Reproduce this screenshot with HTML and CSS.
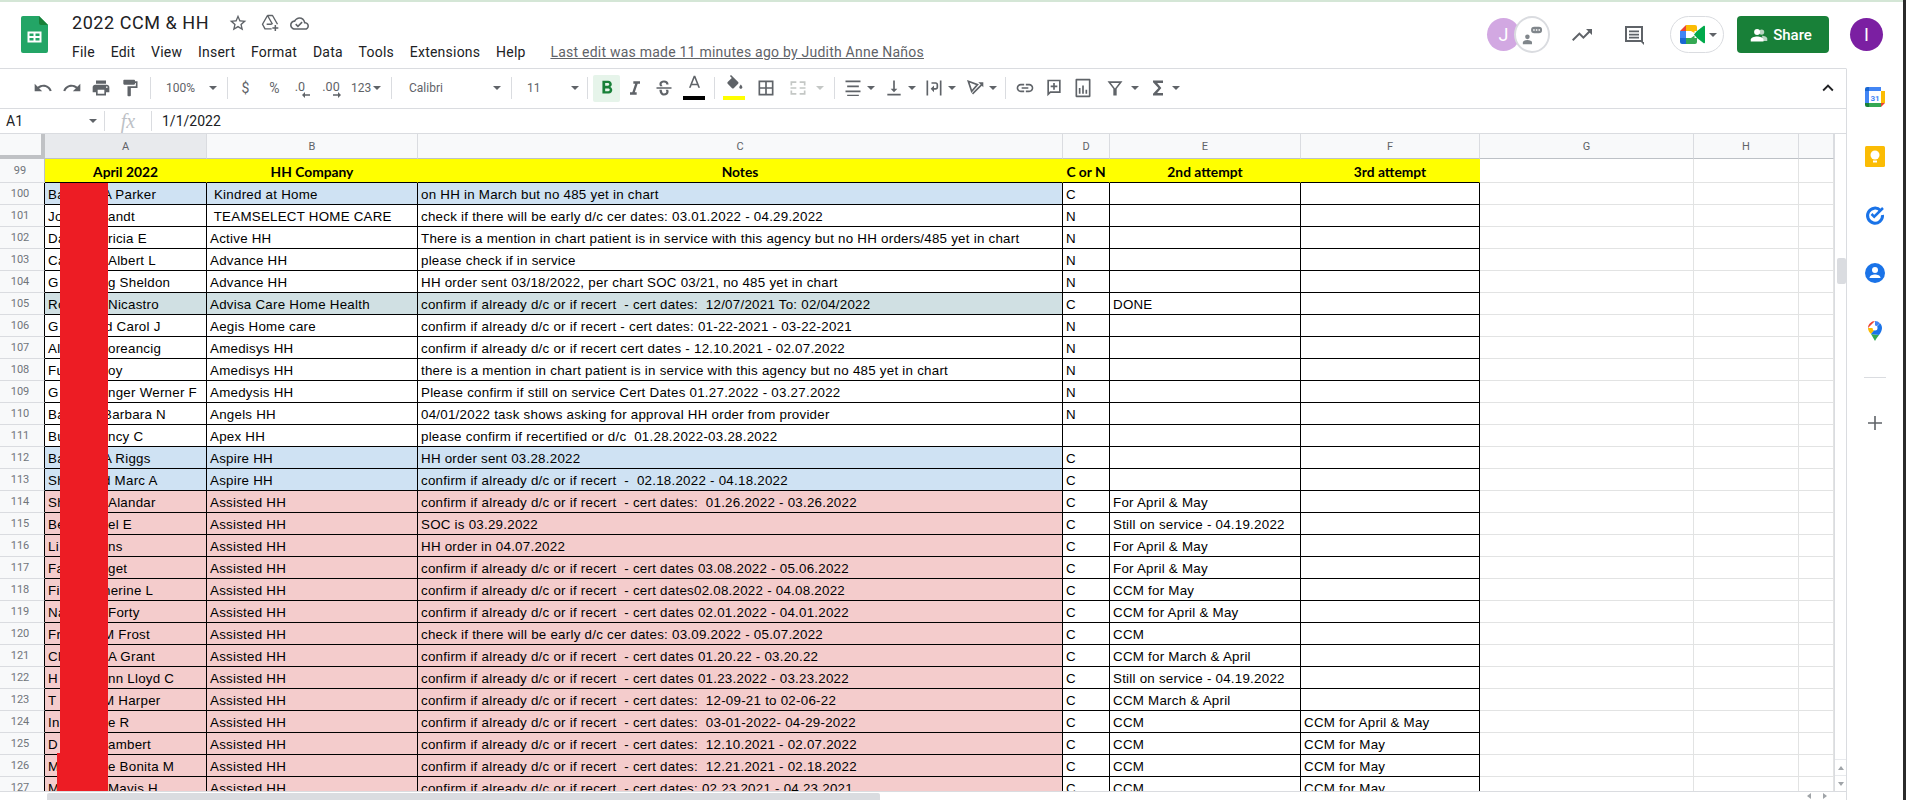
FILE: index.html
```html
<!DOCTYPE html>
<html lang="en">
<head>
<meta charset="utf-8">
<title>2022 CCM &amp; HH</title>
<link rel="stylesheet" href="styles.css">
</head>
<body>
<div class="page">
<div class="app">
  <header class="appbar">
    <svg class="logo" viewBox="0 0 27 37"><path fill="#23a566" d="M2 0h16l9 9v26a2 2 0 0 1-2 2H2a2 2 0 0 1-2-2V2a2 2 0 0 1 2-2z"/><path fill="#188038" d="M18 0l9 9h-7a2 2 0 0 1-2-2z"/><path fill="#fff" d="M6.5 15.5h14v11h-14z"/><path fill="#23a566" d="M8.5 17.5h4v2.5h-4zM14.500 17.500h4V20h-4zM8.500 22h4v2.500h-4zM14.500 22h4v2.500h-4z"/></svg>
    <div class="doc">
      <div class="titlerow">
        <span class="title">2022 CCM &amp; HH</span>
        <svg class="ti star" viewBox="0 0 24 24"><path d="M22 9.240l-7.190-.62L12 2 9.190 8.630 2 9.240l5.460 4.730L5.820 21 12 17.270 18.180 21l-1.630-7.030L22 9.240zM12 15.400l-3.760 2.270 1-4.280-3.320-2.880 4.380-.38L12 6.100l1.710 4.040 4.380.38-3.320 2.880 1 4.280L12 15.400z"/></svg>
        <svg class="ti drive" viewBox="0 0 24 24"><path class="st" d="M9 3h6l6 10.500M9 3 3 13.500 6 19h8M9 3l6 10.500M8 13.500h6"/><path d="M17.500 14.500h1.800v2.700H22V19h-2.700v2.700h-1.800V19h-2.700v-1.800h2.700z"/></svg>
        <svg class="ti cloud" viewBox="0 0 24 24"><path d="M19.350 10.040C18.670 6.590 15.640 4 12 4 9.110 4 6.600 5.640 5.350 8.040 2.340 8.360 0 10.910 0 14c0 3.310 2.690 6 6 6h13c2.760 0 5-2.240 5-5 0-2.640-2.050-4.780-4.650-4.960zM19 18H6c-2.210 0-4-1.790-4-4 0-2.050 1.530-3.760 3.560-3.970l1.070-.11.5-.95C8.080 7.140 9.940 6 12 6c2.620 0 4.880 1.860 5.390 4.430l.3 1.500 1.530.11c1.560.1 2.780 1.410 2.780 2.960 0 1.650-1.350 3-3 3zm-9-3.820l-2.090-2.090L6.500 13.500 10 17l6.010-6.010-1.410-1.410z"/></svg>
      </div>
      <nav class="menu">
        <span>File</span><span>Edit</span><span>View</span><span>Insert</span><span>Format</span><span>Data</span><span>Tools</span><span>Extensions</span><span>Help</span>
        <span class="lastedit">Last edit was made 11 minutes ago by Judith Anne Naños</span>
      </nav>
    </div>
    <div class="actions">
      <div class="avatar av-j">J</div>
      <div class="chatcircle"><svg viewBox="0 0 24 24"><path fill="#80868b" d="M7 11.500a2.500 2.500 0 1 1 0 5 2.500 2.500 0 0 1 0-5zM2 22v-2c0-1.500 2.500-2.500 5-2.500s5 1 5 2.500v2z"/><rect x="11" y="3" width="12" height="7" rx="3.500" fill="#80868b"/><path fill="#fff" d="M13.300 5.700h1.600v1.600h-1.600zM16.200 5.700h1.600v1.600h-1.600zM19.100 5.700h1.600v1.600h-1.600z"/></svg></div>
      <svg class="act trend" viewBox="0 0 24 24"><path d="M16 6l2.290 2.290-4.880 4.880-4-4L2 16.590 3.410 18l6-6 4 4 6.300-6.290L22 12V6z"/></svg>
      <svg class="act cmt" viewBox="0 0 24 24"><path d="M3 3h18v16h1v3l-3-3H3zm2 2v12h14V5zm2 2.500h10v1.800H7zm0 3.200h10v1.800H7zm0 3.100h10v1.700H7z"/></svg>
      <div class="meet">
        <svg viewBox="0 0 25 19"><path fill="#ea4335" d="M0 6l6-6v6z"/><path fill="#4285f4" d="M0 6h6v7H0z"/><path fill="#1967d2" d="M0 13h6v6H2a2 2 0 0 1-2-2z"/><path fill="#fbbc04" d="M6 0h9a2 2 0 0 1 2 2v4h-2.500v2L11 6H6z"/><path fill="#34a853" d="M6 13h5l3.500-2.500V13H17v4a2 2 0 0 1-2 2H6z"/><path fill="#00a94b" d="M14 9.500 17 6l6.500-5c.7-.5 1.500 0 1.500.8v15.400c0 .8-.8 1.300-1.500.8L17 13z"/></svg>
        <span class="caret meetcaret"></span>
      </div>
      <button class="share"><svg viewBox="0 0 24 24"><circle cx="15.500" cy="8" r="3.500" fill="#b7d5c1"/><path fill="#b7d5c1" d="M16 13c3 0 7 1.500 7 4v3h-6z"/><circle cx="9.500" cy="8" r="4" fill="#fff"/><path fill="#fff" d="M9.500 14C6 14 1 15.700 1 18v2.500h17V18c0-2.300-5-4-8.500-4z"/></svg>Share</button>
      <div class="avatar av-i">I</div>
    </div>
  </header>

  <div class="workspace">
    <main class="main">
      <div class="toolbar">
        <span class="tb"><svg viewBox="0 0 24 24"><path d="M12.500 8c-2.650 0-5.050.99-6.900 2.600L2 7v9h9l-3.620-3.620c1.390-1.160 3.160-1.880 5.120-1.880 3.540 0 6.550 2.310 7.600 5.500l2.370-.78C21.080 11.030 17.150 8 12.500 8z"/></svg></span>
        <span class="tb"><svg viewBox="0 0 24 24"><path d="M18.400 10.600C16.550 8.990 14.150 8 11.500 8c-4.650 0-8.580 3.030-9.960 7.220L3.900 16c1.050-3.190 4.050-5.500 7.600-5.500 1.950 0 3.730.72 5.120 1.880L13 16h9V7l-3.600 3.600z"/></svg></span>
        <span class="tb"><svg viewBox="0 0 24 24"><path d="M19 8H5c-1.660 0-3 1.340-3 3v6h4v4h12v-4h4v-6c0-1.660-1.340-3-3-3zm-3 11H8v-5h8v5zm3-7c-.55 0-1-.45-1-1s.45-1 1-1 1 .45 1 1-.45 1-1 1zm-1-9H6v4h12V3z"/></svg></span>
        <span class="tb"><svg viewBox="0 0 24 24"><path d="M18 4V3c0-.55-.45-1-1-1H5c-.55 0-1 .45-1 1v4c0 .55.45 1 1 1h12c.55 0 1-.45 1-1V6h1v4H9v11c0 .55.45 1 1 1h2c.55 0 1-.45 1-1v-9h8V4h-3z"/></svg></span>
        <span class="sep ml6"></span>
        <span class="sel zoomsel"><span>100%</span><span class="caret"></span></span>
        <span class="sep"></span>
        <span class="tb ml3 glyph">$</span>
        <span class="tb glyph">%</span>
        <span class="tb dec w22"><span>.0</span><svg viewBox="0 0 8 6"><path d="M8 2.300H3V0L0 3l3 3V3.700h5z"/></svg></span>
        <span class="tb dec w40"><span>.00</span><svg viewBox="0 0 8 6"><path d="M0 2.300h5V0l3 3-3 3V3.700H0z"/></svg></span>
        <span class="sel numsel"><span>123</span><span class="caret"></span></span>
        <span class="sep"></span>
        <span class="sel fontsel"><span>Calibri</span><span class="caret"></span></span>
        <span class="sep"></span>
        <span class="sel sizesel"><span>11</span><span class="caret"></span></span>
        <span class="sep"></span>
        <span class="boldbtn"><svg viewBox="0 0 24 24"><path d="M15.600 10.790c.97-.67 1.650-1.770 1.650-2.790 0-2.260-1.750-4-4-4H7v14h7.040c2.090 0 3.710-1.700 3.710-3.790 0-1.520-.86-2.820-2.150-3.420zM10 6.500h3c.83 0 1.500.67 1.500 1.500s-.67 1.500-1.500 1.500h-3v-3zm3.500 9H10v-3h3.500c.83 0 1.500.67 1.500 1.500s-.67 1.500-1.500 1.500z"/></svg></span>
        <span class="tb"><svg viewBox="0 0 24 24"><path d="M10 4v3h2.210l-3.420 10H6v3h8v-3h-2.210l3.420-10H18V4z"/></svg></span>
        <span class="tb"><svg viewBox="0 0 24 24"><path d="M12 3C9 3 6.500 4.500 6.500 7.200c0 1 .3 1.800.9 2.800h3c-.8-.8-1.300-1.500-1.300-2.500 0-1.400 1.300-2 2.900-2 1.800 0 2.700.9 2.800 2.300h2.700C17.400 4.900 15.300 3 12 3zM3 11v2h18v-2zm6.300 3H6.500c.2 4.500 2.500 7 5.500 7 3.200 0 5.500-1.800 5.500-4.500 0-1-.1-1.800-.5-2.500h-3c.6.700.8 1.500.8 2.500 0 1.300-1.300 2-2.800 2-1.500 0-2.500-1.600-2.700-4.500z"/></svg></span>
        <span class="tb colorbtn"><svg viewBox="0 0 24 24"><path d="M11 1L5 16h2.250l1.120-3h7.250l1.120 3H19L13 1h-2zm-1.880 10L12 3.700 14.880 11H9.120z"/></svg><i class="bar black"></i></span>
        <span class="sep ml4"></span>
        <span class="tb colorbtn w30 ml4"><svg viewBox="0 0 24 24"><path d="M7.600 0 6.200 1.400l2.400 2.400-5.200 5.100c-.6.6-.6 1.600 0 2.200l5.500 5.500c.6.6 1.500.6 2.100 0l5.600-5.500c.6-.6.6-1.600 0-2.200zM20 12s-2 2.200-2 3.500c0 1.100.9 2 2 2s2-.9 2-2c0-1.300-2-3.500-2-3.500z"/></svg><i class="bar yellow"></i></span>
        <span class="tb ml2"><svg viewBox="0 0 24 24"><path d="M3 3v18h18V3H3zm8 16H5v-6h6v6zm0-8H5V5h6v6zm8 8h-6v-6h6v6zm0-8h-6V5h6v6z"/></svg></span>
        <span class="tb ml3 dim"><svg viewBox="0 0 24 24"><path d="M3 4h7v2H5v3H3zM14 4h7v5h-2V6h-5zM3 15h2v3h5v2H3zM19 15h2v5h-7v-2h5zM3 11h7v2H3zM14 11h7v2h-7z"/></svg></span>
        <span class="caretbox"><span class="caret dimcaret"></span></span>
        <span class="sep ml6"></span>
        <span class="tb ml3"><svg viewBox="0 0 24 24"><path d="M3 3h18v2H3zM5 9h14v2H5zM3 15h18v2H3zM5 20h14v1.500H5z"/></svg></span>
        <span class="caret"></span>
        <span class="tb ml4"><svg viewBox="0 0 24 24"><path d="M16 13h-3V3h-2v10H8l4 4 4-4zM4 19v2h16v-2H4z"/></svg></span>
        <span class="caret"></span>
        <span class="tb ml3"><svg viewBox="0 0 24 24"><path d="M3 3h2v18H3zM19 3h2v18h-2zM9 5h5c1.700 0 3 1.300 3 3v3c0 1.700-1.300 3-3 3h-2v3l-4-4 4-4v3h2c.6 0 1-.4 1-1V8c0-.6-.4-1-1-1H9z"/></svg></span>
        <span class="caret"></span>
        <span class="tb ml4"><svg viewBox="0 0 24 24"><path class="strk" d="M4 4l11 4-7 8z"/><path class="strk" d="M9 19 21 7"/><path d="M22 5v6l-6-6z"/></svg></span>
        <span class="caret"></span>
        <span class="sep ml8"></span>
        <span class="tb ml4"><svg viewBox="0 0 24 24"><path d="M3.900 12c0-1.710 1.390-3.100 3.100-3.100h4V7H7c-2.760 0-5 2.240-5 5s2.240 5 5 5h4v-1.900H7c-1.710 0-3.100-1.390-3.100-3.100zM8 13h8v-2H8v2zm9-6h-4v1.900h4c1.710 0 3.100 1.390 3.100 3.100s-1.390 3.100-3.100 3.100h-4V17h4c2.760 0 5-2.240 5-5s-2.240-5-5-5z"/></svg></span>
        <span class="tb"><svg viewBox="0 0 24 24"><path d="M4 2h16v16H8l-4 4zm2 2v13.200L7.200 16H18V4zm5 2h2v3h3v2h-3v3h-2v-3H8V9h3z"/></svg></span>
        <span class="tb"><svg viewBox="0 0 24 24"><path d="M4 1h16c.6 0 1 .4 1 1v20c0 .6-.4 1-1 1H4c-.6 0-1-.4-1-1V2c0-.6.4-1 1-1zm1 2v18h14V3zm2 9h2v7H7zm4-3h2v10h-2zm4 5h2v5h-2z"/></svg></span>
        <span class="tb ml3"><svg viewBox="0 0 24 24"><path d="M3 4h18l-7 9v8h-4v-8zm4 2 5 6.500L17 6zm5 9v4h0v-4z"/></svg></span>
        <span class="caret ml2"></span>
        <span class="tb ml4"><svg viewBox="0 0 24 24"><path d="M18 3H6v2l6.500 7L6 19v2h12v-3h-7l5-6-5-6h7z"/></svg></span>
        <span class="caret"></span>
        <span class="tb chevron"><svg viewBox="0 0 24 24"><path d="M7.410 15.410 12 10.830l4.590 4.580L18 14l-6-6-6 6z"/></svg></span>
      </div>

      <div class="formula">
        <span class="namebox"><span>A1</span><span class="caret"></span></span>
        <span class="fsep"></span>
        <span class="fx">fx</span>
        <span class="fsep"></span>
        <span class="fval">1/1/2022</span>
      </div>

      <div class="sheet">
        <div class="sheet-body">
          <div class="gridwrap">
            <table class="grid">
              <colgroup><col class="c-rh"><col class="c-a"><col class="c-b"><col class="c-c"><col class="c-d"><col class="c-e"><col class="c-f"><col class="c-g"><col class="c-h"><col class="c-i"></colgroup>
              <thead>
                <tr class="letters"><th class="corner"></th><th class="selcol">A</th><th>B</th><th>C</th><th>D</th><th>E</th><th>F</th><th>G</th><th>H</th><th></th></tr>
              </thead>
              <tbody>
                <tr class="head"><th class="rh">99</th><td>April 2022</td><td>HH Company</td><td>Notes</td><td>C or N</td><td>2nd attempt</td><td>3rd attempt</td><td></td><td></td><td></td></tr>
                <tr class="blue"><th class="rh">100</th><td><span class="lead s">Ba</span>A Parker</td><td> Kindred at Home</td><td>on HH in March but no 485 yet in chart</td><td>C</td><td></td><td></td><td></td><td></td><td></td></tr>
                <tr><th class="rh">101</th><td><span class="lead">Jo</span>andt</td><td> TEAMSELECT HOME CARE</td><td>check if there will be early d/c cer dates: 03.01.2022 - 04.29.2022</td><td>N</td><td></td><td></td><td></td><td></td><td></td></tr>
                <tr><th class="rh">102</th><td><span class="lead">Da</span>ricia E</td><td>Active HH</td><td>There is a mention in chart patient is in service with this agency but no HH orders/485 yet in chart</td><td>N</td><td></td><td></td><td></td><td></td><td></td></tr>
                <tr><th class="rh">103</th><td><span class="lead">Ca</span>Albert L</td><td>Advance HH</td><td>please check if in service</td><td>N</td><td></td><td></td><td></td><td></td><td></td></tr>
                <tr><th class="rh">104</th><td><span class="lead">G</span>g Sheldon</td><td>Advance HH</td><td>HH order sent 03/18/2022, per chart SOC 03/21, no 485 yet in chart</td><td>N</td><td></td><td></td><td></td><td></td><td></td></tr>
                <tr class="teal"><th class="rh">105</th><td><span class="lead">Ro</span>Nicastro</td><td>Advisa Care Home Health</td><td>confirm if already d/c or if recert  - cert dates:  12/07/2021 To: 02/04/2022</td><td>C</td><td>DONE</td><td></td><td></td><td></td><td></td></tr>
                <tr><th class="rh">106</th><td><span class="lead m">G</span>d Carol J</td><td>Aegis Home care</td><td>confirm if already d/c or if recert - cert dates: 01-22-2021 - 03-22-2021</td><td>N</td><td></td><td></td><td></td><td></td><td></td></tr>
                <tr><th class="rh">107</th><td><span class="lead">Al</span>oreancig</td><td>Amedisys HH</td><td>confirm if already d/c or if recert cert dates - 12.10.2021 - 02.07.2022</td><td>N</td><td></td><td></td><td></td><td></td><td></td></tr>
                <tr><th class="rh">108</th><td><span class="lead">Fu</span>oy</td><td>Amedisys HH</td><td>there is a mention in chart patient is in service with this agency but no 485 yet in chart</td><td>N</td><td></td><td></td><td></td><td></td><td></td></tr>
                <tr><th class="rh">109</th><td><span class="lead">G</span>nger Werner F</td><td>Amedysis HH</td><td>Please confirm if still on service Cert Dates 01.27.2022 - 03.27.2022</td><td>N</td><td></td><td></td><td></td><td></td><td></td></tr>
                <tr><th class="rh">110</th><td><span class="lead s">Ba</span>Barbara N</td><td>Angels HH</td><td>04/01/2022 task shows asking for approval HH order from provider</td><td>N</td><td></td><td></td><td></td><td></td><td></td></tr>
                <tr><th class="rh">111</th><td><span class="lead">Bu</span>ncy C</td><td>Apex HH</td><td>please confirm if recertified or d/c  01.28.2022-03.28.2022</td><td></td><td></td><td></td><td></td><td></td><td></td></tr>
                <tr class="blue"><th class="rh">112</th><td><span class="lead s">Ba</span>A Riggs</td><td>Aspire HH</td><td>HH order sent 03.28.2022</td><td>C</td><td></td><td></td><td></td><td></td><td></td></tr>
                <tr class="blue"><th class="rh">113</th><td><span class="lead s">Sh</span>d Marc A</td><td>Aspire HH</td><td>confirm if already d/c or if recert  -  02.18.2022 - 04.18.2022</td><td>C</td><td></td><td></td><td></td><td></td><td></td></tr>
                <tr class="pink"><th class="rh">114</th><td><span class="lead">Sh</span>Alandar</td><td>Assisted HH</td><td>confirm if already d/c or if recert  - cert dates:  01.26.2022 - 03.26.2022</td><td>C</td><td>For April &amp; May</td><td></td><td></td><td></td><td></td></tr>
                <tr class="pink"><th class="rh">115</th><td><span class="lead">Be</span>el E</td><td>Assisted HH</td><td>SOC is 03.29.2022</td><td>C</td><td>Still on service - 04.19.2022</td><td></td><td></td><td></td><td></td></tr>
                <tr class="pink"><th class="rh">116</th><td><span class="lead">Li</span>ns</td><td>Assisted HH</td><td>HH order in 04.07.2022</td><td>C</td><td>For April &amp; May</td><td></td><td></td><td></td><td></td></tr>
                <tr class="pink"><th class="rh">117</th><td><span class="lead">Fa</span>get</td><td>Assisted HH</td><td>confirm if already d/c or if recert  - cert dates 03.08.2022 - 05.06.2022</td><td>C</td><td>For April &amp; May</td><td></td><td></td><td></td><td></td></tr>
                <tr class="pink"><th class="rh">118</th><td><span class="lead s">Fi</span>herine L</td><td>Assisted HH</td><td>confirm if already d/c or if recert  - cert dates02.08.2022 - 04.08.2022</td><td>C</td><td>CCM for May</td><td></td><td></td><td></td><td></td></tr>
                <tr class="pink"><th class="rh">119</th><td><span class="lead">Na</span>Forty</td><td>Assisted HH</td><td>confirm if already d/c or if recert  - cert dates 02.01.2022 - 04.01.2022</td><td>C</td><td>CCM for April &amp; May</td><td></td><td></td><td></td><td></td></tr>
                <tr class="pink"><th class="rh">120</th><td><span class="lead s">Fr</span>M Frost</td><td>Assisted HH</td><td>check if there will be early d/c cer dates: 03.09.2022 - 05.07.2022</td><td>C</td><td>CCM</td><td></td><td></td><td></td><td></td></tr>
                <tr class="pink"><th class="rh">121</th><td><span class="lead">Cl</span>A Grant</td><td>Assisted HH</td><td>confirm if already d/c or if recert  - cert dates 01.20.22 - 03.20.22</td><td>C</td><td>CCM for March &amp; April</td><td></td><td></td><td></td><td></td></tr>
                <tr class="pink"><th class="rh">122</th><td><span class="lead">H</span>nn Lloyd C</td><td>Assisted HH</td><td>confirm if already d/c or if recert  - cert dates 01.23.2022 - 03.23.2022</td><td>C</td><td>Still on service - 04.19.2022</td><td></td><td></td><td></td><td></td></tr>
                <tr class="pink"><th class="rh">123</th><td><span class="lead s">T</span>M Harper</td><td>Assisted HH</td><td>confirm if already d/c or if recert  - cert dates:  12-09-21 to 02-06-22</td><td>C</td><td>CCM March &amp; April</td><td></td><td></td><td></td><td></td></tr>
                <tr class="pink"><th class="rh">124</th><td><span class="lead">In</span>e R</td><td>Assisted HH</td><td>confirm if already d/c or if recert  - cert dates:  03-01-2022- 04-29-2022</td><td>C</td><td>CCM</td><td>CCM for April &amp; May</td><td></td><td></td><td></td></tr>
                <tr class="pink"><th class="rh">125</th><td><span class="lead">D</span>ambert</td><td>Assisted HH</td><td>confirm if already d/c or if recert  - cert dates:  12.10.2021 - 02.07.2022</td><td>C</td><td>CCM</td><td>CCM for May</td><td></td><td></td><td></td></tr>
                <tr class="pink"><th class="rh">126</th><td><span class="lead">M</span>e Bonita M</td><td>Assisted HH</td><td>confirm if already d/c or if recert  - cert dates:  12.21.2021 - 02.18.2022</td><td>C</td><td>CCM</td><td>CCM for May</td><td></td><td></td><td></td></tr>
                <tr class="pink"><th class="rh">127</th><td><span class="lead">M</span>Mavis H</td><td>Assisted HH</td><td>confirm if already d/c or if recert  - cert dates: 02.23.2021 - 04.23.2021</td><td>C</td><td>CCM</td><td>CCM for May</td><td></td><td></td><td></td></tr>
              </tbody>
            </table>
            <div class="redact"></div>
          </div>
          <div class="vscroll">
            <div class="vthumb"></div>
            <div class="vbtn"><span class="tri up"></span></div>
            <div class="vbtn"><span class="tri down"></span></div>
          </div>
        </div>
        <div class="hscroll">
          <div class="hthumb"></div>
          <span class="tri left"></span>
          <span class="tri right"></span>
        </div>
      </div>
    </main>

    <aside class="side">
      <svg class="si" viewBox="0 0 20 20"><path fill="#fff" d="M4 4h12v12H4z"/><path fill="#4285f4" d="M0 4h4v12H0zM4 0h12v4H4z"/><path fill="#1967d2" d="M0 2a2 2 0 0 1 2-2h2v4H0z"/><path fill="#fbbc04" d="M16 4h4v12h-4z"/><path fill="#34a853" d="M4 16h12v4H4z"/><path fill="#188038" d="M0 16h4v4H2a2 2 0 0 1-2-2z"/><path fill="#ea4335" d="M16 16h4l-4 4z"/><text x="10" y="13.500" class="cal31">31</text></svg>
      <svg class="si" viewBox="0 0 20 20"><rect width="20" height="21" rx="1.500" fill="#fbbc04"/><circle cx="10" cy="9" r="4.500" fill="#fff"/><path fill="#fff" d="M8 14.500h4v2H8z"/></svg>
      <svg class="si" viewBox="0 0 20 20"><path fill="none" stroke="#1a73e8" stroke-width="3" d="M15.500 6.500A7.500 7.500 0 1 0 17.500 11"/><path fill="none" stroke="#1a73e8" stroke-width="2.500" d="M6.500 10l2.700 2.700L18 4"/></svg>
      <svg class="si" viewBox="0 0 20 20"><circle cx="10" cy="10" r="10" fill="#1a73e8"/><circle cx="10" cy="7" r="3" fill="#fff"/><path fill="#fff" d="M4.500 15c0-2.500 3-3.500 5.500-3.500s5.500 1 5.500 3.500z"/></svg>
      <svg class="si mapsi" viewBox="0 0 20 20"><path fill="#34a853" d="M6 13l4 7c1.500-3 3-4.500 4-6z"/><path fill="#fbbc04" d="M3 7c0 2.500 1.500 4.500 3 6l5-6z"/><path fill="#ea4335" d="M5 2.200A7 7 0 0 1 10 0l-7 7c0-2 .7-3.500 2-4.800z"/><path fill="#4285f4" d="M10 0a7 7 0 0 1 5 2.200L10 7z"/><path fill="#1a73e8" d="M15 2.200c1.300 1.300 2 2.800 2 4.800 0 2.500-1.500 5-3 7L6 13z"/><circle cx="10" cy="7" r="2.500" fill="#fff"/></svg>
      <div class="sdiv"></div>
      <svg class="si plus" viewBox="0 0 20 20"><path d="M9.200 3h1.600v6.200H17v1.600h-6.200V17H9.200v-6.200H3V9.200h6.200z"/></svg>
    </aside>
  </div>
</div>
<div class="strip"></div>
</div>
</body>
</html>
```

FILE: styles.css
```css
* { box-sizing: border-box; }
html, body { margin: 0; height: 100%; overflow: hidden; background: #fff; }
body { font-family: Roboto, "Liberation Sans", sans-serif; color: #202124; }
.page { display: flex; width: 1906px; height: 800px; }
.app { flex: 1; min-width: 0; display: flex; flex-direction: column; }
.strip { width: 3px; background: #2b2b2b; }

/* header */
.appbar { height: 68px; flex: none; display: flex; align-items: flex-start; border-top: 2px solid #d4e6d6; }
.logo { width: 27px; height: 37px; margin: 14px 0 0 21px; flex: none; }
.doc { margin-left: 24px; padding-top: 10px; }
.titlerow { display: flex; align-items: center; height: 22px; }
.title { font-size: 18px; line-height: 22px; color: #202124; letter-spacing: .55px; }
.ti { width: 20px; height: 20px; fill: #5f6368; }
.star { margin-left: 19px; }
.drive { margin-left: 12px; }
.cloud { margin-left: 10px; width: 19px; height: 19px; }
.st { fill: none; stroke: #5f6368; stroke-width: 1.700; stroke-linejoin: round; }
.menu { display: flex; gap: 15.750px; margin-top: 7px; font-size: 14px; line-height: 22px; letter-spacing: .23px; color: #202124; }
.lastedit { margin-left: 9px; color: #5f6368; text-decoration: underline; }
.actions { margin-left: auto; margin-top: 14px; padding-right: 20px; display: flex; align-items: center; height: 37px; }
.avatar { width: 33px; height: 33px; border-radius: 50%; color: #fff; font-size: 18px; display: flex; align-items: center; justify-content: center; }
.av-j { background: #d2a8e2; }
.av-i { background: #7b1fa2; margin-left: 21px; }
.chatcircle { width: 36px; height: 37px; border-radius: 50%; background: #fff; border: 2px solid #dadce0; margin-left: -6px; display: flex; align-items: center; justify-content: center; }
.chatcircle svg { width: 22px; height: 22px; }
.act { width: 24px; height: 24px; fill: #5f6368; }
.trend { margin-left: 20px; }
.cmt { margin-left: 28px; }
.meet { width: 54px; height: 37px; margin-left: 24px; border: 1px solid #dadce0; border-radius: 19px; display: flex; align-items: center; padding-left: 9px; gap: 4px; }
.meet svg { width: 25px; height: 19px; flex: none; }
.meetcaret { border-top-color: #1a73e8; }
.share { width: 92px; height: 37px; margin-left: 13px; background: #188038; color: #fff; border: 0; border-radius: 4px; font: 500 15px Roboto, sans-serif; display: flex; align-items: center; justify-content: center; gap: 5px; padding: 0 4px 0 0; }
.share svg { width: 18px; height: 18px; }

/* workspace */
.workspace { flex: 1; min-height: 0; display: flex; }
.main { flex: 1; min-width: 0; display: flex; flex-direction: column; }
.side { width: 57px; flex: none; border-left: 1px solid #dadce0; border-top: 1px solid #fff; display: flex; flex-direction: column; align-items: center; gap: 38.500px; padding-top: 18px; }
.si { width: 20px; height: 20px; flex: none; overflow: visible; }
.cal31 { font: 700 8px Roboto, sans-serif; fill: #4285f4; text-anchor: middle; }
.sdiv { width: 22px; height: 1px; background: #dadce0; margin-top: -3px; flex: none; }
.plus { fill: #5f6368; margin-top: -3px; }

/* toolbar */
.toolbar { height: 41px; flex: none; display: flex; align-items: center; padding: 0 4px 1px 28px; border-top: 1px solid #dadce0; border-bottom: 1px solid #dadce0; font-size: 12px; color: #5f6368; }
.tb { width: 29px; height: 100%; flex: none; display: flex; align-items: center; justify-content: center; position: relative; }
.tb svg { width: 20px; height: 20px; fill: #5f6368; }
.tb .strk { fill: none; stroke: #5f6368; stroke-width: 2; }
.glyph { font-size: 14px; }
.sep { width: 1px; height: 22px; background: #dadce0; flex: none; }
.ml2 { margin-left: 2px; } .ml3 { margin-left: 3px; } .ml4 { margin-left: 4px; } .ml6 { margin-left: 6px; } .ml8 { margin-left: 8px; }
.caret { width: 0; height: 0; flex: none; border-left: 4px solid transparent; border-right: 4px solid transparent; border-top: 4px solid #5f6368; }
.dimcaret { border-top-color: #c4c7c5; }
.caretbox { width: 16px; display: flex; justify-content: center; flex: none; }
.dim svg { fill: #c4c7c5; }
.sel { height: 100%; flex: none; display: flex; align-items: center; justify-content: space-between; }
.zoomsel { width: 76px; padding: 0 10px 0 15px; }
.numsel { width: 40px; justify-content: flex-start; gap: 2px; padding: 0; font-size: 12px; }
.fontsel { width: 119px; padding: 0 10px 0 17px; }
.sizesel { width: 75px; padding: 0 8px 0 15px; }
.dec { flex-direction: column; }
.dec span { font-size: 12.500px; line-height: 11px; margin-top: 3px; }
.dec svg { width: 8px; height: 6px; margin-left: 11px; }
.w22 { width: 22px; }
.w40 { width: 40px; }
.boldbtn { width: 27px; height: 27px; margin-left: 5px; background: #e6f4ea; border-radius: 2px; flex: none; display: flex; align-items: center; justify-content: center; }
.boldbtn svg { width: 22px; height: 22px; fill: #188038; }
.colorbtn { width: 32px; }
.colorbtn.w30 { width: 30px; }
.colorbtn svg { margin-top: -7px; width: 19px; height: 19px; }
.bar { position: absolute; left: 5px; right: 5px; top: 27px; height: 4px; }
.black { background: #000; }
.yellow { background: #ffff00; left: 4px; right: 4px; }
.chevron { margin-left: auto; }
.chevron svg { fill: #202124; width: 22px; height: 22px; }

/* formula bar */
.formula { height: 25px; flex: none; display: flex; align-items: center; border-bottom: 1px solid #dadce0; font-size: 14px; }
.namebox { width: 104px; display: flex; align-items: center; justify-content: space-between; padding: 0 7px 0 6px; color: #202124; }
.fsep { width: 1px; height: 20px; background: #dadce0; flex: none; }
.fx { width: 46px; text-align: center; font: italic 20px "Liberation Serif", serif; color: #bdc1c6; }
.fval { margin-left: 10px; color: #202124; }

/* sheet */
.sheet { flex: 1; min-height: 0; display: flex; flex-direction: column; }
.sheet-body { flex: 1; min-height: 0; display: flex; }
.gridwrap { width: 1834px; flex: none; position: relative; overflow: hidden; }
.grid { width: 1834px; table-layout: fixed; border-collapse: separate; border-spacing: 0; font: 13.330px "Liberation Sans", Arial, sans-serif; letter-spacing: .25px; color: #000; }
.c-rh { width: 45px; } .c-a { width: 162px; } .c-b { width: 211px; } .c-c { width: 645px; } .c-d { width: 47px; }
.c-e { width: 191px; } .c-f { width: 179px; } .c-g { width: 214px; } .c-h { width: 105px; } .c-i { width: 35px; }

.letters th { height: 25px; padding: 0; background: #f8f9fa; border-right: 1px solid #dadce0; border-bottom: 1px solid #bdc1c6; font: 400 11px Roboto, sans-serif; letter-spacing: 0; color: #5f6368; }
.letters .corner { border-right: 4px solid #c0c2c5; border-bottom: 4px solid #c0c2c5; }
.letters .selcol { background: #e8eaed; }

.rh { padding: 0 4px 0 0; background: #f8f9fa; border-right: 1px solid #000; border-bottom: 1px solid #dadce0; font: 400 11px Roboto, sans-serif; letter-spacing: 0; color: #70757a; text-align: center; }
tbody td { height: 22px; padding: 0 3px; line-height: 19px; vertical-align: bottom; white-space: pre; overflow: hidden; border-right: 1px solid #000; border-bottom: 1px solid #000; }
tbody td:nth-child(n+8) { border-color: #e2e3e3; }

.head .rh { border-right-color: #bdc1c6; }
.head td { height: 24px; background: #ffff00; border-right-color: #ffff00; font: 700 13.800px/20px Lato, sans-serif; letter-spacing: 0; text-align: center; padding: 0; }
.head td:nth-child(n+8) { background: #fff; }
.blue td:nth-child(-n+4) { background: #cfe2f3; }
.teal td:nth-child(-n+4) { background: #d0e0e3; }
.pink td:nth-child(-n+4) { background: #f4cccc; }

.lead { display: inline-block; width: 60px; }
.lead.s { width: 55px; }
.lead.m { width: 57px; }

.redact { position: absolute; left: 57px; top: 49px; bottom: 0; width: 51px; background: #ed1c24; clip-path: polygon(3px 0, 100% 0, 100% 100%, 0 100%, 0 570px, 3px 570px); }

.vscroll { flex: 1; display: flex; flex-direction: column; border-left: 1px solid #dadce0; padding-top: 124px; }
.vthumb { width: 9px; height: 26px; margin-left: 2px; background: #dadce0; border-radius: 2px; }
.vbtn { height: 16px; display: flex; align-items: center; justify-content: center; border-top: 1px solid #e8eaed; }
.vthumb + .vbtn { margin-top: auto; }
.tri { width: 0; height: 0; border: 3px solid transparent; flex: none; }
.up { border-bottom: 4px solid #a0a4a8; border-top: 0; }
.down { border-top: 4px solid #a0a4a8; border-bottom: 0; }
.left { border-right: 4px solid #a0a4a8; border-left: 0; }
.right { border-left: 4px solid #a0a4a8; border-right: 0; }
.hscroll { height: 9px; flex: none; display: flex; align-items: center; border-top: 1px solid #dadce0; }
.hthumb { width: 833px; height: 7px; margin: 1px 0 0 47px; background: #dadce0; border-radius: 2px 2px 0 0; }
.hscroll .left { margin-left: auto; }
.hscroll .right { margin: 0 19px 0 12px; }
```
